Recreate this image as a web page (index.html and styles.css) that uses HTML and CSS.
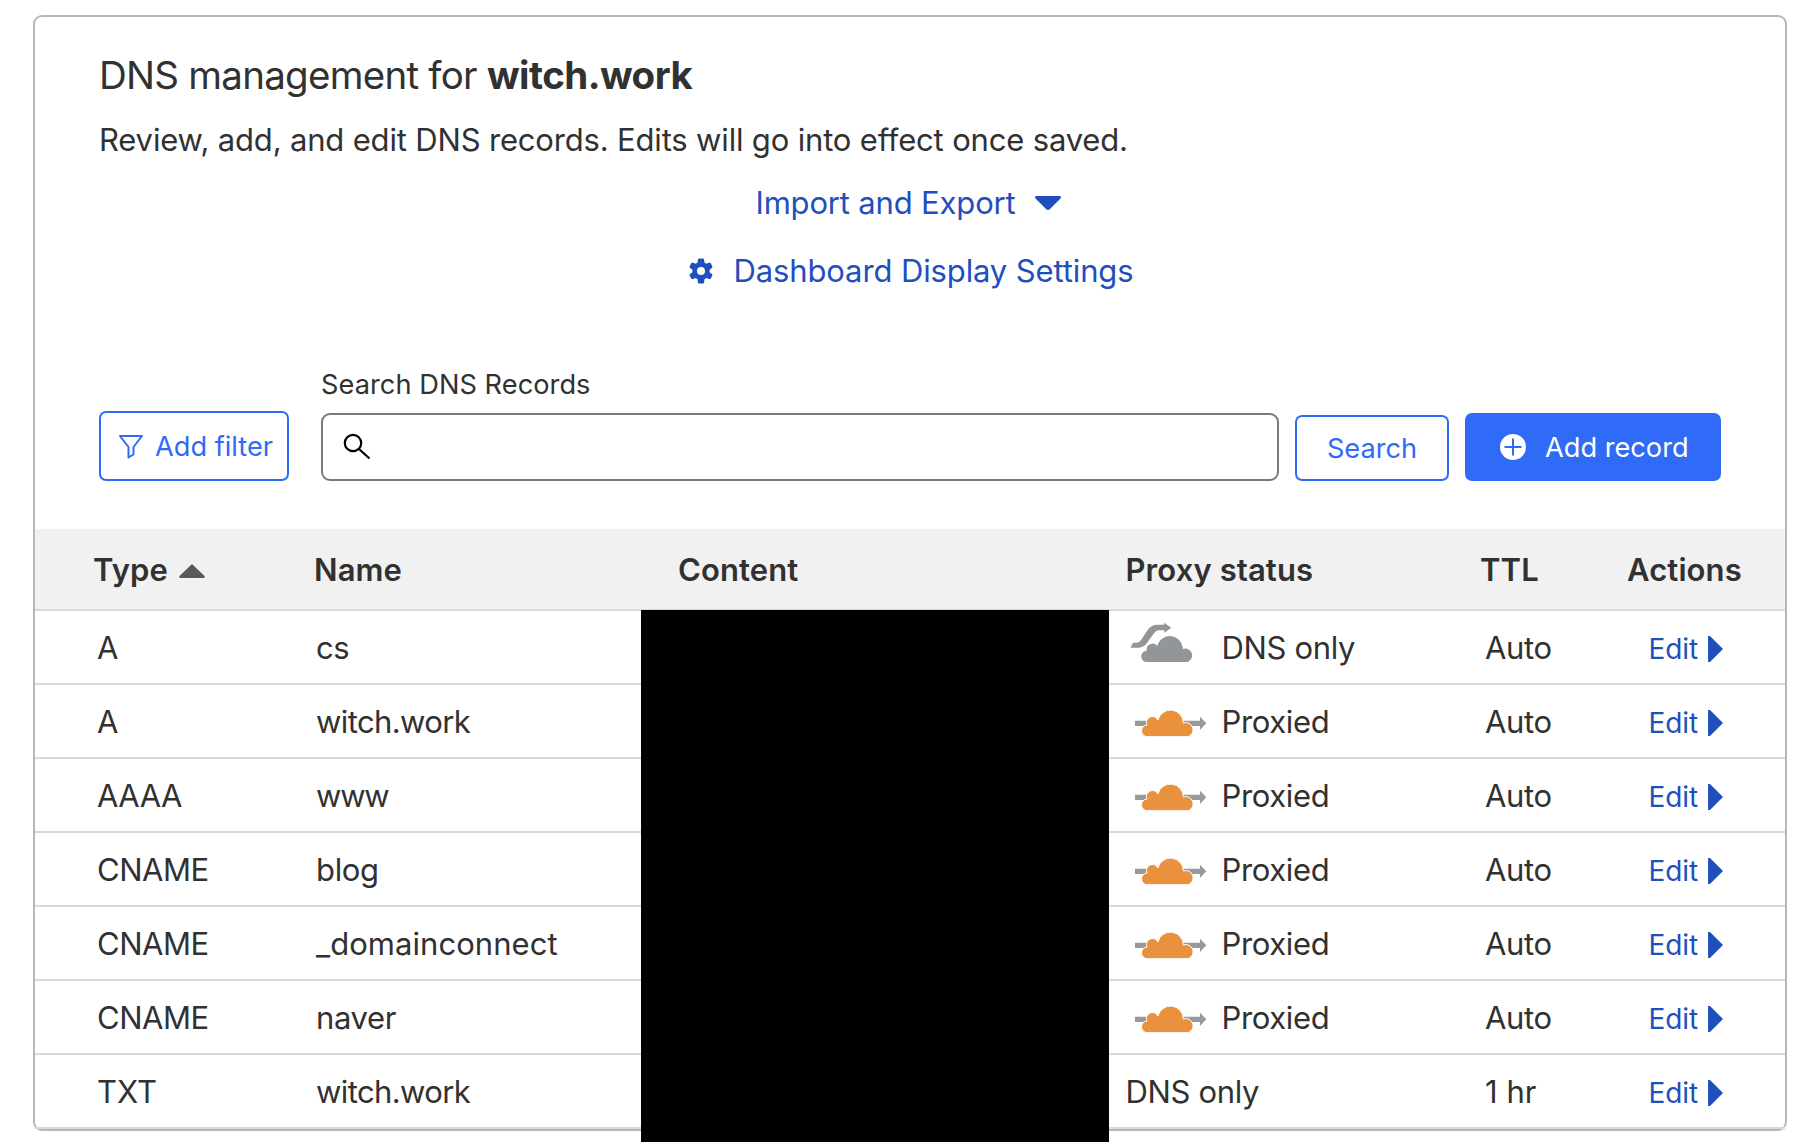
FILE: index.html
```html
<!DOCTYPE html>
<html lang="en">
<head>
<meta charset="utf-8">
<title>DNS management</title>
<link rel="stylesheet" href="styles.css">
</head>
<body>
<svg width="0" height="0" class="defs" aria-hidden="true">
  <defs>
    <symbol id="cloud-bypass" viewBox="48 60 243 135">
      <path d="M58 143L66 128H78Q86 127 95 113Q108 92 115 84Q125 74 138 74H159V68L181 83L160 98V91H144Q135 91 128 101Q108 129 103 135Q95 143 82 143Z"/>
      <path d="M108 186A17 17 0 0 1 107 152A18 18 0 0 1 139 138A38.500 38.500 0 0 1 215 147A20 20 0 1 1 230 186Z"/>
    </symbol>
    <symbol id="cloud-proxied" viewBox="48 60 243 135">
      <path fill="#999" d="M72 140H120V156H72ZM210 140H267V128L286 148L267 168V156H210Z"/>
      <path fill="#e9913c" stroke="#fff" stroke-width="3" d="M110 188A17 17 0 0 1 108 153A18 18 0 0 1 141 138A38.500 38.500 0 0 1 217 147A20.500 20.500 0 1 1 232 188Z"/>
    </symbol>
  </defs>
</svg>
<main class="card">
  <header class="intro">
    <h1 class="title">DNS management for <strong>witch.work</strong></h1>
    <p class="subtitle">Review, add, and edit DNS records. Edits will go into effect once saved.</p>
    <a class="link link-import"><span>Import and Export</span><svg width="26" height="14" viewBox="0 0 26 14"><path d="M1 0H25Q27 1 25 3L15 13Q13 15 11 13L1 3Q-1 1 1 0Z"/></svg></a>
    <a class="link link-settings"><svg width="24" height="26" viewBox="0 0 24 26"><path fill-rule="evenodd" d="M10 .5H14Q15 .5 15.200 2L15.400 4.600L17.500 5.800L19.800 4.700Q21 4.300 21.700 5.300L23.300 8.200Q23.800 9.300 22.800 10L20.600 11.700V14.200L22.800 15.900Q23.800 16.600 23.300 17.700L21.700 20.500Q21 21.500 19.800 21.100L17.500 20L15.400 21.200L15.200 23.900Q15 25.400 14 25.400H10Q9 25.400 8.800 23.900L8.600 21.200L6.500 20L4.200 21.100Q3 21.500 2.300 20.500L.7 17.700Q.2 16.600 1.200 15.900L3.400 14.200V11.700L1.200 10Q.2 9.300 .7 8.200L2.300 5.300Q3 4.300 4.200 4.700L6.500 5.800L8.600 4.600L8.800 2Q9 .5 10 .5ZM12 8.900A4 4 0 1 0 12 16.900A4 4 0 1 0 12 8.900Z"/></svg><span>Dashboard Display Settings</span></a>
  </header>
  <form class="toolbar">
    <button type="button" class="btn btn-filter"><svg width="26" height="25" viewBox="0 0 26 25"><path fill="none" stroke="currentColor" stroke-width="2" stroke-linejoin="round" d="M2 2H24L15.500 13V20.500L10.500 23.500V13Z"/></svg><span>Add filter</span></button>
    <div class="field">
      <label>Search DNS Records</label>
      <div class="search-box"><svg width="28" height="27" viewBox="0 0 28 27"><circle cx="10" cy="10" r="8.200"/><path d="M16 16L26.500 25.500"/></svg></div>
    </div>
    <button type="button" class="btn btn-search"><span>Search</span></button>
    <button type="button" class="btn btn-add"><svg width="26" height="26" viewBox="0 0 26 26"><circle cx="13" cy="13" r="13"/><path d="M13 4.500V21.500M4.500 13H21.500"/></svg><span>Add record</span></button>
  </form>
  <div class="records">
    <table>
      <colgroup><col class="c-type"><col class="c-name"><col class="c-content"><col class="c-proxy"><col class="c-ttl"><col class="c-actions"></colgroup>
      <thead><tr><th>Type<svg class="sort" width="26" height="14" viewBox="0 0 26 14"><path d="M13 0L25.500 12Q26.500 14 24.500 14H1.500Q-.5 14 .5 12Z"/></svg></th><th>Name</th><th>Content</th><th>Proxy status</th><th>TTL</th><th>Actions</th></tr></thead>
      <tbody>
        <tr><td>A</td><td>cs</td><td></td><td><div class="proxy"><svg class="bypass"><use href="#cloud-bypass"/></svg>DNS only</div></td><td>Auto</td><td><a class="edit">Edit<i></i></a></td></tr>
        <tr><td>A</td><td class="tight">witch.work</td><td></td><td><div class="proxy"><svg><use href="#cloud-proxied"/></svg>Proxied</div></td><td>Auto</td><td><a class="edit">Edit<i></i></a></td></tr>
        <tr><td>AAAA</td><td class="tighter">www</td><td></td><td><div class="proxy"><svg><use href="#cloud-proxied"/></svg>Proxied</div></td><td>Auto</td><td><a class="edit">Edit<i></i></a></td></tr>
        <tr><td>CNAME</td><td>blog</td><td></td><td><div class="proxy"><svg><use href="#cloud-proxied"/></svg>Proxied</div></td><td>Auto</td><td><a class="edit">Edit<i></i></a></td></tr>
        <tr><td>CNAME</td><td class="loose">_domainconnect</td><td></td><td><div class="proxy"><svg><use href="#cloud-proxied"/></svg>Proxied</div></td><td>Auto</td><td><a class="edit">Edit<i></i></a></td></tr>
        <tr><td>CNAME</td><td>naver</td><td></td><td><div class="proxy"><svg><use href="#cloud-proxied"/></svg>Proxied</div></td><td>Auto</td><td><a class="edit">Edit<i></i></a></td></tr>
        <tr><td class="loose">TXT</td><td class="tight">witch.work</td><td></td><td>DNS only</td><td class="loose">1 hr</td><td><a class="edit">Edit<i></i></a></td></tr>
      </tbody>
    </table>
    <div class="redaction"></div>
  </div>
</main>
</body>
</html>
```
FILE: styles.css
```css
* { box-sizing: border-box; }

body {
  margin: 0;
  height: 1144px;
  overflow: hidden;
  background: #fff;
  color: #313131;
  font: 31px/36px Inter, "Liberation Sans", sans-serif;
  letter-spacing: -.17px;
  white-space: nowrap;
}

.defs { display: block; height: 0; }

.card {
  width: 1754px;
  height: 1116px;
  margin: 15px 0 0 33px;
  border: 2px solid #b6b7b7;
  border-radius: 9px;
}

.intro {
  display: flex;
  flex-direction: column;
  height: 342px;
  padding: 34px 64px 0;
}

.title { margin: 0; font-size: 38.5px; font-weight: 400; line-height: 48px; letter-spacing: -.74px; }
.title strong { font-weight: 700; letter-spacing: -.55px; }
.subtitle { margin: 23px 0 0; }

.link {
  display: flex;
  align-items: center;
  justify-content: center;
  color: #1f4fbc;
  fill: #1f4fbc;
}
.link-import { gap: 19px; margin-top: 27px; padding-right: 4px; }
.link-settings { gap: 20px; margin-top: 32px; padding-left: 3px; letter-spacing: -.12px; }
.link-settings svg { margin-bottom: 1px; }

.toolbar {
  display: flex;
  align-items: flex-end;
  height: 122px;
  padding: 0 64px;
  font-size: 27.2px;
  letter-spacing: 0;
}

.btn {
  display: flex;
  align-items: center;
  padding: 0;
  border: 2px solid #2f6bf6;
  border-radius: 7px;
  background: #fff;
  color: #2f6bf6;
  font: inherit;
}
.btn span { padding-top: 2px; }
.btn-filter { width: 190px; height: 70px; padding-left: 17px; gap: 11px; }
.btn-search { width: 154px; height: 66px; margin-left: 16px; justify-content: center; }
.btn-add { width: 256px; height: 68px; margin-left: 16px; padding-left: 33px; gap: 19px; background: #2f6bf6; color: #fff; }
.btn-add circle { fill: #fff; }
.btn-add path { stroke: #2f6bf6; stroke-width: 2; }

.field { flex: 1; margin-left: 32px; }
.field label { display: block; margin-bottom: 10px; letter-spacing: .05px; }
.search-box {
  display: flex;
  align-items: center;
  height: 68px;
  padding-left: 20px;
  border: 2px solid #797979;
  border-radius: 9px;
}
.search-box svg { margin-bottom: 2px; fill: none; stroke: #000; stroke-width: 2.2; }

.records { position: relative; margin-top: 48px; }

table { width: 100%; table-layout: fixed; border-collapse: separate; border-spacing: 0; }
.c-type { width: 279px; }
.c-name { width: 364px; }
.c-content { width: 447.5px; }
.c-proxy { width: 354.5px; }
.c-ttl { width: 147px; }

th, td { padding: 0; border-bottom: 2px solid #d9d9d9; text-align: left; }
th { height: 82px; padding-top: 2px; background: #f1f1f1; font-weight: 600; letter-spacing: .1px; }
td { height: 74px; padding-top: 2px; letter-spacing: -.35px; }
th:first-child { padding-left: 58px; }
td:first-child { padding-left: 62px; letter-spacing: -.5px; }
td:nth-child(2) { padding-left: 2px; }
td:nth-child(5) { padding-left: 5px; }
td.tight { letter-spacing: -.6px; }
td.tighter { letter-spacing: -1.2px; }
td.loose, td.loose:first-child { letter-spacing: .05px; }
.sort { margin: 0 0 3px 11px; fill: #595959; }

.proxy { display: flex; align-items: center; }
.proxy svg { width: 81px; height: 45px; margin: 0 14px 12px 1px; }
.bypass { fill: #929699; }

.edit { display: flex; align-items: center; padding: 2px 0 0 21.5px; color: #1f4fbc; font-size: 28px; letter-spacing: -.1px; }
.edit i { width: 15px; height: 26px; margin-left: 10px; background: #1f4fbc; clip-path: polygon(0 0, 13% 0, 100% 50%, 13% 100%, 0 100%); }

.redaction {
  position: absolute;
  top: 81px;
  left: 606px;
  width: 468px;
  height: 532px;
  background: #000;
}
```
